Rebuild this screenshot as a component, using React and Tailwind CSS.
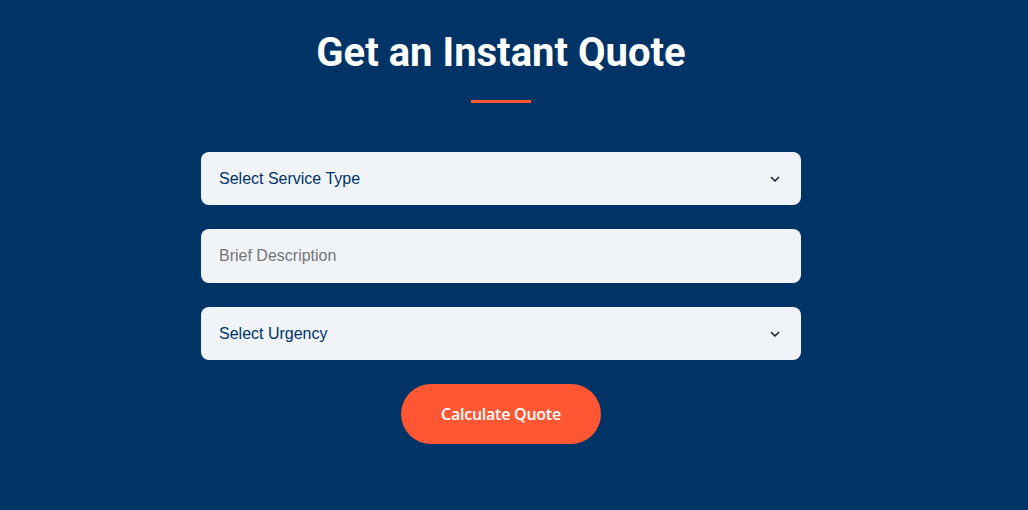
import React, { useState } from "react";

const Chevron = () => (
  <svg width="12" height="12" viewBox="0 0 12 12" fill="none" className="pointer-events-none absolute right-[20px] top-1/2 -translate-y-1/2">
    <path d="M2.5 4.5 6 8l3.5-3.5" stroke="#1f2d3d" strokeWidth="1.7" strokeLinecap="round" strokeLinejoin="round" />
  </svg>
);

export default function App() {
  const [service, setService] = useState("");
  const [desc, setDesc] = useState("");
  const [urgency, setUrgency] = useState("");

  return (
    <div className="min-h-[510px] w-full bg-[#003366] font-['Liberation_Sans',Arial,sans-serif]">
      <div className="w-[1002px] pt-[29px]">
        {/* Heading */}
        <h2 className="text-center font-['Roboto',sans-serif] text-[40px] font-bold leading-[48px] text-white">
          Get an Instant Quote
        </h2>
        <div className="mx-auto mt-[23px] h-[3px] w-[60px] bg-[#ff5733]" />

        {/* Form */}
        <form className="mx-auto mt-[49px] flex w-[600px] flex-col gap-6" onSubmit={(e) => e.preventDefault()}>
          <div className="relative">
            <select
              value={service}
              onChange={(e) => setService(e.target.value)}
              className="h-[53px] w-full appearance-none rounded-lg bg-[#f0f4f8] px-[18px] text-[16px] text-[#003366] outline-none"
            >
              <option value="">Select Service Type</option>
              <option value="repair">Repair</option>
              <option value="install">Installation</option>
            </select>
            <Chevron />
          </div>

          <input
            type="text"
            value={desc}
            onChange={(e) => setDesc(e.target.value)}
            placeholder="Brief Description"
            className="h-[54px] w-full rounded-lg bg-[#f0f4f8] px-[18px] text-[16px] text-[#003366] outline-none placeholder:text-[#757575]"
          />

          <div className="relative">
            <select
              value={urgency}
              onChange={(e) => setUrgency(e.target.value)}
              className="h-[53px] w-full appearance-none rounded-lg bg-[#f0f4f8] px-[18px] text-[16px] text-[#003366] outline-none"
            >
              <option value="">Select Urgency</option>
              <option value="normal">Normal</option>
              <option value="urgent">Urgent</option>
            </select>
            <Chevron />
          </div>

          <button
            type="submit"
            className="mx-auto h-[60px] w-[200px] rounded-full bg-[#ff5733] font-['Open_Sans',sans-serif] text-[16px] font-semibold tracking-[-0.25px] text-white"
          >
            Calculate Quote
          </button>
        </form>
      </div>
    </div>
  );
}
